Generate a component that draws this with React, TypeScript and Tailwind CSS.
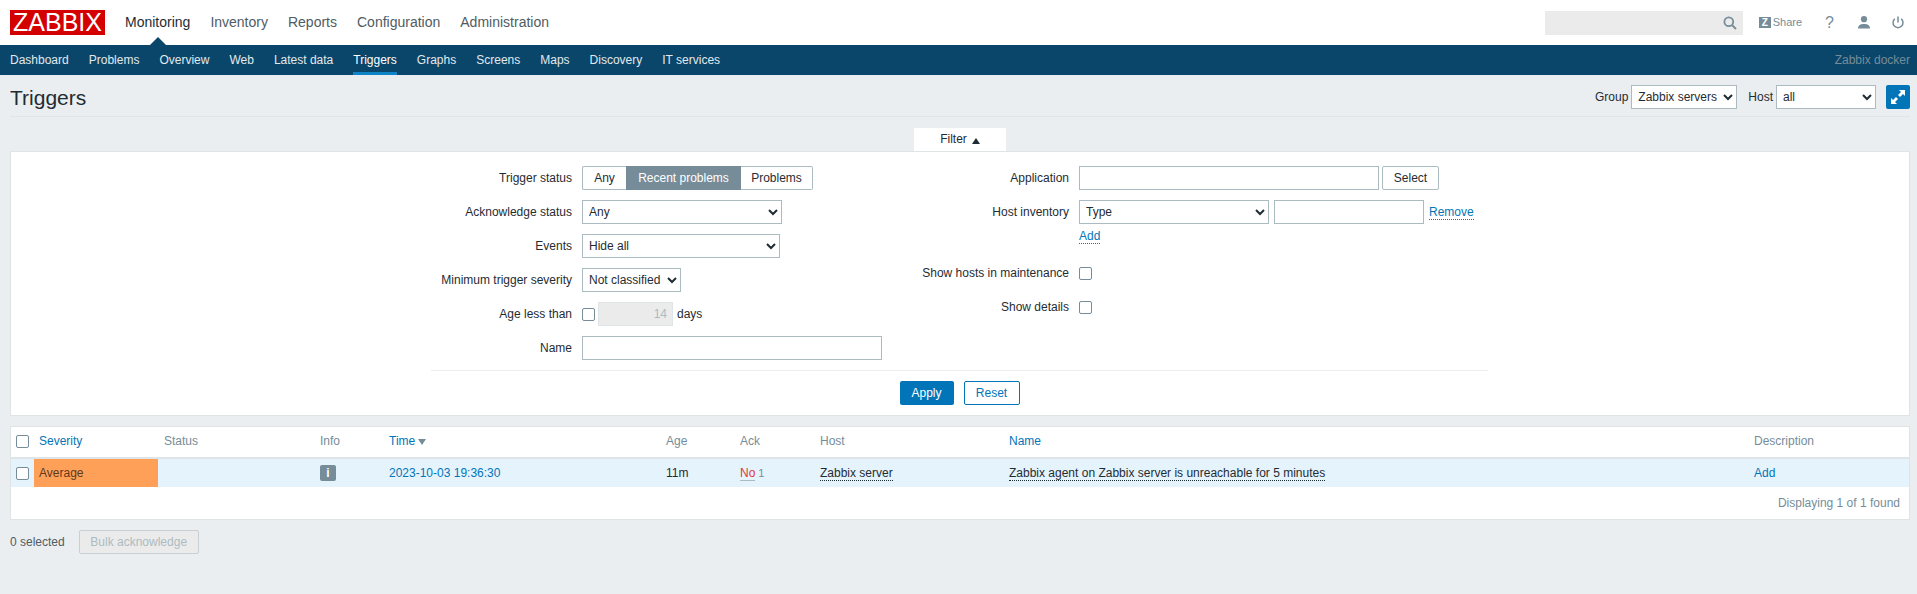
import React from "react";

const fieldCls = "h-6 border border-[#acbbc2] bg-white text-xs text-[#1f2c33] px-[5px] outline-none rounded-none";
const selectCls = "h-6 border border-[#acbbc2] bg-white text-xs text-[#1f2c33] px-[2px] outline-none rounded-none";
const labelCls = "h-6 flex items-center justify-end text-xs text-[#1f2c33]";
const checkCls = "appearance-none block w-[13px] h-[13px] border border-[#768d99] bg-white rounded-[2px]";

function Sel({ w, children }: { w: string; children: React.ReactNode }) {
  return <select className={`${selectCls} ${w}`}>{children}</select>;
}

const mainNav = ["Monitoring", "Inventory", "Reports", "Configuration", "Administration"];
const subNav = ["Dashboard", "Problems", "Overview", "Web", "Latest data", "Triggers", "Graphs", "Screens", "Maps", "Discovery", "IT services"];

export default function App() {
  return (
    <div className="min-h-[594px] bg-[#ebeef0] text-xs text-[#1f2c33] font-['Liberation_Sans',Arial,sans-serif]">
      {/* top bar */}
      <header className="h-[45px] bg-white flex items-start pl-[10px] pr-[13px]">
        <div className="mt-[10px] w-[95px] h-[25px] bg-[#d40000] text-white text-[25px] leading-[25px] text-center">ZABBIX</div>
        <nav className="ml-[10px] flex">
          {mainNav.map((n, i) => (
            <div key={n} className={`relative h-[45px] px-[10px] flex items-center text-sm pb-[1px] ${i === 0 ? "text-[#1f2c33]" : "text-[#4f5c63]"}`}>
              {n}
              {i === 0 && <span className="absolute left-1/2 -translate-x-1/2 bottom-0 w-0 h-0 border-x-[8px] border-x-transparent border-b-[8px] border-b-[#0a466a]" />}
            </div>
          ))}
        </nav>
        <div className="ml-auto flex items-center h-[45px]">
          <div className="w-[198px] h-6 bg-[#ebebeb] flex items-center justify-end pr-[6px]">
            <svg width="14" height="14" viewBox="0 0 14 14" fill="none" stroke="#768d99" strokeWidth="1.8"><circle cx="5.8" cy="5.8" r="4.4" /><path d="M9 9l4 4" /></svg>
          </div>
          <div className="ml-[16px] flex items-center text-[#768d99]">
            <span className="w-[12px] h-[11px] bg-[#768d99] text-white text-[10px] leading-[11px] font-bold text-center">Z</span>
            <span className="ml-[2px] text-[11px]">Share</span>
          </div>
          <span className="ml-[23px] text-[#768d99] text-base leading-none">?</span>
          <svg className="ml-[24px]" width="12" height="13" viewBox="0 0 12 13" fill="#768d99"><circle cx="6" cy="3.2" r="3.1" /><path d="M0 12.6c0-3.4 2.4-4.6 6-4.6s6 1.2 6 4.6z" /></svg>
          <svg className="ml-[22px]" width="12" height="13" viewBox="0 0 12 13" fill="none" stroke="#768d99" strokeWidth="1.5"><path d="M6 0.5v6" /><path d="M2.8 2.8a5 5 0 1 0 6.4 0" /></svg>
        </div>
      </header>

      {/* sub nav */}
      <div className="h-[30px] bg-[#0a466a] flex items-stretch justify-between pr-[7px]">
        <div className="flex">
          {subNav.map((n, i) => (
            <div key={n} className={`relative px-[10px] flex items-center text-xs ${i === 5 ? "text-white font-medium" : "text-[#e2e9ed]"}`}>
              {n}
              {i === 5 && <span className="absolute left-[10px] right-[10px] bottom-0 h-[3px] bg-[#0f85c8]" />}
            </div>
          ))}
        </div>
        <div className="flex items-center text-xs text-[#768d99]">Zabbix docker</div>
      </div>

      <main className="pl-[10px] pr-[7px]">
        {/* title */}
        <div className="h-[42px] pt-[3px] border-b border-[#dfe4e7] flex items-center justify-between">
          <h1 className="text-[21px] leading-none font-normal text-[#1f2c33]">Triggers</h1>
          <div className="flex items-center">
            <span>Group</span>
            <select className={`${selectCls} w-[106px] ml-[3px]`}><option>Zabbix servers</option></select>
            <span className="ml-[11px]">Host</span>
            <select className={`${selectCls} w-[100px] ml-[3px]`}><option>all</option></select>
            <div className="ml-[10px] w-6 h-6 bg-[#0275b8] rounded-[2px] flex items-center justify-center">
              <svg width="14" height="14" viewBox="0 0 14 14" fill="white"><path d="M8 0h6v6l-2-2-3 3-2-2 3-3z" /><path d="M6 14H0V8l2 2 3-3 2 2-3 3z" /></svg>
            </div>
          </div>
        </div>

        {/* filter */}
        <div className="mt-[11px] flex justify-center">
          <div className="w-[92px] h-[23px] bg-white flex items-center justify-center pb-[1px]">
            Filter
            <svg className="ml-[5px] mt-[3px]" width="8" height="6" viewBox="0 0 8 6" fill="#1f2c33"><path d="M4 0l4 6H0z" /></svg>
          </div>
        </div>
        <section className="bg-white border border-[#dfe4e7] pt-[14px] h-[265px]">
          <div className="ml-[420px] w-[1057px] flex items-start">
            <div className="grid grid-cols-[141px_300px] gap-x-[10px] gap-y-[10px]">
              <div className={labelCls}>Trigger status</div>
              <div className="flex h-6">
                <span className="w-[44px] flex items-center justify-center border border-r-0 border-[#acbbc2] rounded-l-[2px]">Any</span>
                <span className="w-[115px] flex items-center justify-center bg-[#768d99] text-white">Recent problems</span>
                <span className="w-[72px] flex items-center justify-center border border-l-0 border-[#acbbc2] rounded-r-[2px]">Problems</span>
              </div>
              <div className={labelCls}>Acknowledge status</div>
              <div><Sel w="w-[200px]"><option>Any</option></Sel></div>
              <div className={labelCls}>Events</div>
              <div><Sel w="w-[198px]"><option>Hide all</option></Sel></div>
              <div className={labelCls}>Minimum trigger severity</div>
              <div><Sel w="w-[99px]"><option>Not classified</option></Sel></div>
              <div className={labelCls}>Age less than</div>
              <div className="flex items-center h-6">
                <input type="checkbox" className={checkCls} />
                <input disabled defaultValue="14" className="ml-[3px] w-[75px] h-6 border border-[#dfe4e7] bg-[#ebebeb] text-right text-xs text-[#acbbc2] font-medium px-[5px]" />
                <span className="ml-[4px]">days</span>
              </div>
              <div className={labelCls}>Name</div>
              <input className={`${fieldCls} w-[300px]`} />
            </div>
            <div className="ml-[40px] grid grid-cols-[147px_auto] gap-x-[10px] gap-y-[10px] auto-rows-min">
              <div className={labelCls}>Application</div>
              <div className="flex h-6">
                <input className={`${fieldCls} w-[300px]`} />
                <span className="ml-[3px] w-[57px] flex items-center justify-center border border-[#acbbc2] rounded-[2px]">Select</span>
              </div>
              <div className={labelCls}>Host inventory</div>
              <div className="flex h-6 items-center">
                <Sel w="w-[190px]"><option>Type</option></Sel>
                <input className={`${fieldCls} w-[150px] ml-[5px]`} />
                <span className="ml-[5px] text-[#0275b8] leading-[14px] border-b border-dotted border-[#0275b8]">Remove</span>
              </div>
              <div className="h-[17px]" />
              <div className="h-[17px]"><span className="block w-fit -mt-[5px] text-[#0275b8] leading-[14px] border-b border-dotted border-[#0275b8]">Add</span></div>
              <div className={labelCls}>Show hosts in maintenance</div>
              <div className="flex items-center h-6"><input type="checkbox" className={checkCls} /></div>
              <div className={labelCls}>Show details</div>
              <div className="flex items-center h-6"><input type="checkbox" className={checkCls} /></div>
            </div>
          </div>
          <div className="ml-[420px] w-[1057px] mt-[10px] border-t border-[#ebeef0] pt-[10px] flex justify-center">
            <button className="w-[54px] h-6 bg-[#0275b8] text-white rounded-[2px] font-medium">Apply</button>
            <button className="ml-[10px] w-[56px] h-6 border border-[#0275b8] text-[#0275b8] rounded-[2px] bg-white">Reset</button>
          </div>
        </section>

        {/* table */}
        <section className="mt-[10px] bg-white border border-[#dfe4e7]">
          <table className="w-full table-fixed border-collapse text-xs">
            <colgroup>
              <col className="w-[23px]" /><col className="w-[124px]" /><col className="w-[156px]" /><col className="w-[69px]" />
              <col className="w-[277px]" /><col className="w-[74px]" /><col className="w-[80px]" /><col className="w-[189px]" />
              <col className="w-[745px]" /><col />
            </colgroup>
            <thead>
              <tr className="h-[31px] border-b-2 border-[#dfe4e7] text-left text-[#768d99]">
                <th className="pl-[5px] pb-[2px] font-normal"><input type="checkbox" className={checkCls} /></th>
                <th className="pl-[5px] pb-[2px] font-normal text-[#0275b8]">Severity</th>
                <th className="pl-[6px] pb-[2px] font-normal">Status</th>
                <th className="pl-[6px] pb-[2px] font-normal">Info</th>
                <th className="pl-[6px] pb-[2px] font-normal text-[#0275b8]">
                  Time<svg className="inline ml-[3px]" width="8" height="6" viewBox="0 0 8 6" fill="#768d99"><path d="M0 0h8L4 6z" /></svg>
                </th>
                <th className="pl-[6px] pb-[2px] font-normal">Age</th>
                <th className="pl-[6px] pb-[2px] font-normal">Ack</th>
                <th className="pl-[6px] pb-[2px] font-normal">Host</th>
                <th className="pl-[6px] pb-[2px] font-normal text-[#0275b8]">Name</th>
                <th className="pl-[6px] pb-[2px] font-normal">Description</th>
              </tr>
            </thead>
            <tbody>
              <tr className="h-[29px] bg-[#e5f3fd]">
                <td className="pl-[5px]"><input type="checkbox" className={checkCls} /></td>
                <td className="pl-[5px] pb-[1px] bg-[#ffa059] text-[#5d3a1c]">Average</td>
                <td />
                <td className="pl-[6px]">
                  <span className="block w-4 h-4 bg-[#768d99] rounded-[2px] text-white text-[12px] leading-4 text-center font-bold">i</span>
                </td>
                <td className="pl-[6px] pb-[1px] text-[#0275b8]">2023-10-03 19:36:30</td>
                <td className="pl-[6px] pb-[1px]">11m</td>
                <td className="pl-[6px] pb-[1px]">
                  <span className="text-[#e33734] border-b border-[#acbbc2]">No</span>
                  <span className="ml-[3px] text-[#768d99] text-[11px]">1</span>
                </td>
                <td className="pl-[6px] pb-[1px]"><span className="border-b border-dotted border-[#1f2c33]">Zabbix server</span></td>
                <td className="pl-[6px] pb-[1px]"><span className="border-b border-dotted border-[#1f2c33]">Zabbix agent on Zabbix server is unreachable for 5 minutes</span></td>
                <td className="pl-[6px] pb-[1px] text-[#0275b8]">Add</td>
              </tr>
            </tbody>
          </table>
          <div className="h-[32px] flex items-center justify-end pr-[9px] text-[#768d99]">Displaying 1 of 1 found</div>
        </section>

        <div className="mt-[10px] flex items-center h-6">
          <span className="text-[#4f5c63]">0 selected</span>
          <button disabled className="ml-[14px] w-[120px] h-6 border border-[#c8d0d5] rounded-[2px] bg-[#ebebeb] text-[#acbbc2]">Bulk acknowledge</button>
        </div>
      </main>
    </div>
  );
}
